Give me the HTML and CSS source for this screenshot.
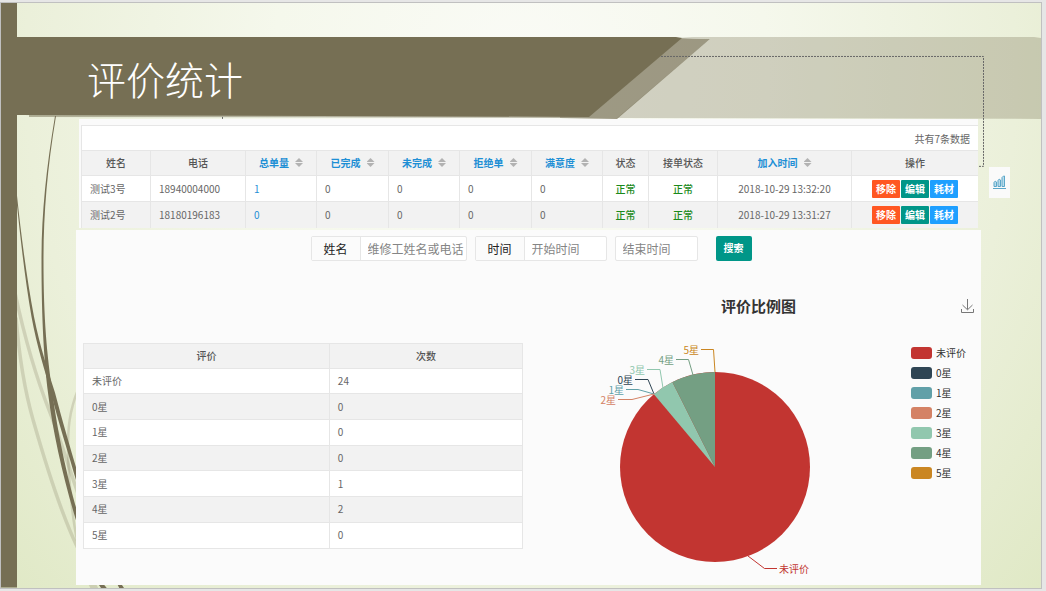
FILE: index.html
```html
<!DOCTYPE html>
<html lang="zh-CN">
<head>
<meta charset="utf-8">
<title>评价统计</title>
<link rel="stylesheet" href="styles.css">
</head>
<body>
<div class="slide">
  <svg class="art" viewBox="1 3 1040 585" preserveAspectRatio="none" aria-hidden="true">
    <g fill="none" stroke="#766f54" stroke-opacity=".22">
      <path stroke-width="3.5" d="M15 293C25 340 37 380 50 413S70 472 78 494"/>
      <path stroke-width="3.5" d="M16 318C19 355 25 392 33 420S58 508 78 549"/>
      <path stroke-width="2.5" d="M78 390C69 412 68 430 68 448S71 515 78 545"/>
      <path stroke-width="7" d="M91 582L96 592"/>
    </g>
    <g fill="#766f54">
      <path d="M55 116C46 170 41.500 215 41.500 260C41.500 320 44 360 48 393C53 435 65 485 77 524L77 511C67 477 57 430 52.500 393C47 355 43.500 320 43.500 260C43.500 215 47 170 56 116Z"/>
      <path d="M16 196C20 235 25 280 31.500 317C37 347 45 371 51 393C58 422 69 455 77 484L77 471C70 447 62 420 55 393C48 371 40 347 34 317C27 280 21 235 17 196Z"/>
      <path d="M98 584L103 584L108 590L102 590ZM117 584L121 584L125 590L120 590Z"/>
      <path d="M1 3H17V588H1Z"/>
      <path fill-opacity=".3" d="M676 37H1034L1041 38V119L617 118L710 39Z"/>
      <path fill-opacity=".7" d="M676 38L710 39L617 119L560 118V114H585Z"/>
      <path fill-opacity=".5" d="M29 114H560V118L29 117Z"/>
      <path d="M17 37H676L682 38L589 117L17 115Z"/>
    </g>
    <path fill="none" stroke="#666" stroke-dasharray="2 1" d="M661 56.500H983.500V166.500H970M222.500 117V120"/>
  </svg>

  <header class="banner"><h1>评价统计</h1></header>

  <main class="content">
    <div class="top">
      <section class="workers">
        <p class="total">共有7条数据</p>
        <table class="grid">
          <colgroup>
            <col class="c-name"><col class="c-phone"><col class="c-count"><col class="c-done"><col class="c-count"><col class="c-done"><col class="c-count"><col class="c-state"><col class="c-order"><col class="c-time"><col>
          </colgroup>
          <thead>
            <tr><th>姓名</th><th>电话</th><th class="sort">总单量<i></i></th><th class="sort">已完成<i></i></th><th class="sort">未完成<i></i></th><th class="sort">拒绝单<i></i></th><th class="sort">满意度<i></i></th><th>状态</th><th>接单状态</th><th class="sort">加入时间<i></i></th><th>操作</th></tr>
          </thead>
          <tbody>
            <tr><td>测试3号</td><td>18940004000</td><td><a href="#">1</a></td><td>0</td><td>0</td><td>0</td><td>0</td><td class="ok">正常</td><td class="ok">正常</td><td class="mid">2018-10-29 13:32:20</td><td><div class="actions"><button class="act del">移除</button><button class="act edit">编辑</button><button class="act part">耗材</button></div></td></tr>
            <tr><td>测试2号</td><td>18180196183</td><td><a href="#">0</a></td><td>0</td><td>0</td><td>0</td><td>0</td><td class="ok">正常</td><td class="ok">正常</td><td class="mid">2018-10-29 13:31:27</td><td><div class="actions"><button class="act del">移除</button><button class="act edit">编辑</button><button class="act part">耗材</button></div></td></tr>
          </tbody>
        </table>
      </section>
      <button class="stats" aria-label="统计">
        <svg width="13" height="15" viewBox="0 0 13 15" fill="#b9dbea" stroke="#5ba7c9"><path d="M1 7.500Q2.200 5 3.500 7V11.500H1ZM5 5.500Q6.200 3 7.500 5V11.500H5ZM9 2.500Q10.500 .5 11.500 1V11.500H9Z"/><path d="M0 13.500H13"/></svg>
      </button>
    </div>

    <section class="panel">
      <form class="search">
        <div class="group"><label for="who">姓名</label><input id="who" class="who" type="text" placeholder="维修工姓名或电话"></div>
        <div class="group"><label for="from">时间</label><input id="from" class="date" type="text" placeholder="开始时间"></div>
        <div class="group"><input class="date" type="text" placeholder="结束时间" aria-label="结束时间"></div>
        <button class="go" type="button">搜索</button>
      </form>
      <div class="split">
        <div class="scores">
          <table class="grid rating">
            <colgroup><col class="c-rate"><col></colgroup>
            <thead><tr><th>评价</th><th>次数</th></tr></thead>
            <tbody>
              <tr><td>未评价</td><td>24</td></tr>
              <tr><td>0星</td><td>0</td></tr>
              <tr><td>1星</td><td>0</td></tr>
              <tr><td>2星</td><td>0</td></tr>
              <tr><td>3星</td><td>1</td></tr>
              <tr><td>4星</td><td>2</td></tr>
              <tr><td>5星</td><td>0</td></tr>
            </tbody>
          </table>
        </div>
        <div class="chart">
          <div class="chart-head">
            <h2>评价比例图</h2>
            <button class="save" aria-label="保存为图片"><svg width="13" height="15" viewBox="0 0 13 15" fill="none" stroke="#777"><path d="M6.500 0V10.500M1.500 6L6.500 10.800L11.500 6M.5 10V13.500H12.500V10"/></svg></button>
          </div>
          <div class="chart-body">
            <svg class="pie" width="240" height="240" viewBox="590 340 240 240" role="img" aria-label="评价比例图">
              <circle cx="715" cy="467" r="95" fill="#c23531"/>
              <path fill="#91c7ae" d="M715 467L653.900 394.200A95 95 0 0 1 672.400 382.100Z"/>
              <path fill="#749f83" d="M715 467L672.400 382.100A95 95 0 0 1 715 372Z"/>
              <g fill="none">
                <path stroke="#ca8622" d="M701 349.500H713.500L715 372"/>
                <path stroke="#749f83" d="M676 359.500H688.500L693 375"/>
                <path stroke="#91c7ae" d="M647 369.500H660L663 388"/>
                <path stroke="#2f4554" d="M635 379.500H648L654 394"/>
                <path stroke="#61a0a8" d="M626 389.500H638L654 394"/>
                <path stroke="#d48265" d="M618 399.500H632L654 394"/>
                <path stroke="#c23531" d="M748 556L764.500 568.500H777"/>
              </g>
              <g text-anchor="end">
                <text x="699" y="354" fill="#ca8622">5星</text>
                <text x="674" y="364" fill="#749f83">4星</text>
                <text x="645" y="374" fill="#91c7ae">3星</text>
                <text x="633" y="384" fill="#2f4554">0星</text>
                <text x="624" y="394" fill="#61a0a8">1星</text>
                <text x="616" y="404" fill="#d48265">2星</text>
              </g>
              <text x="779" y="573" fill="#c23531">未评价</text>
            </svg>
            <ul class="legend">
              <li class="k0">未评价</li><li class="k1">0星</li><li class="k2">1星</li><li class="k3">2星</li><li class="k4">3星</li><li class="k5">4星</li><li class="k6">5星</li>
            </ul>
          </div>
        </div>
      </div>
    </section>
  </main>
</div>
</body>
</html>
```
FILE: styles.css
```css
* { box-sizing: border-box; }
body {
  margin: 0;
  padding: 2px 4px 2px 0;
  background: #e6e6e6;
  color: #666;
  font: 10px/14px "Noto Sans CJK SC", sans-serif;
}
h1, h2, p, ul { margin: 0; padding: 0; font-weight: normal; }
button, input { font: inherit; border: 0; padding: 0; margin: 0; }
a { color: #1e8fd5; text-decoration: none; }

.slide {
  position: relative;
  border: 1px solid #c0c0c0;
  background: radial-gradient(ellipse 68% 135% at 50% 12%, #fafbf6 0%, #f5f8ec 35%, #ebf0da 70%, #dfe8c4 100%);
}
.art { position: absolute; inset: 0; width: 100%; height: 100%; }
.banner, .content { position: relative; }
.banner { padding: 50px 0 16px 86px; }
h1 {
  color: #fff;
  font-size: 39px;
  line-height: 50px;
  font-weight: 300;
}
.content { padding: 0 60px 3px 75px; }

.top { display: flex; gap: 11px; align-items: flex-start; margin: 0 -29px 2px 3px; }
.workers { flex: 1; padding: 6px 0 0 2px; background: #fafafa; }
.total {
  height: 25px;
  padding: 0 8px;
  border: 1px solid #e6e6e6;
  border-width: 1px 0 0 1px;
  background: #fff;
  line-height: 25px;
  text-align: right;
}
.grid { width: 100%; border-collapse: collapse; table-layout: fixed; background: #fff; }
.grid th, .grid td { height: 26px; padding: 0 8px; border: 1px solid #e6e6e6; text-align: left; white-space: nowrap; }
.grid th { height: 25px; padding: 0; background: #f2f2f2; font-weight: 500; text-align: center; color: #555; }
.grid tbody tr:nth-child(even) { background: #f2f2f2; }
.workers .grid tr > * { border-right: 0; }
.workers .grid tr:last-child td { border-bottom: 0; }
.c-name { width: 69px; }
.c-phone { width: 95px; }
.c-count { width: 71px; }
.c-done { width: 72px; }
.c-state { width: 46px; }
.c-order { width: 69px; }
.c-time { width: 134px; }
.grid .sort { color: #1e8fd5; font-weight: bold; }
.sort i {
  display: inline-block;
  width: 8px;
  height: 9px;
  margin-left: 6px;
  background: #b2b2b2;
  clip-path: polygon(50% 0, 100% 44%, 0 44%, 0 56%, 100% 56%, 50% 100%, 0 56%, 0 44%);
}
.grid .ok { padding: 0; color: #1a8a1a; font-weight: 500; text-align: center; }
.grid .mid { padding: 0; text-align: center; }
.actions { display: flex; justify-content: center; gap: 1px; }
.act { width: 28px; height: 18px; color: #fff; font-weight: bold; border-radius: 1px; }
.del { background: #ff5722; }
.edit { background: #009688; }
.part { background: #1e9fff; }
.stats { width: 21px; height: 31px; margin-top: 48px; background: #fafafa; display: grid; place-items: center; }

.panel { padding: 6px 0 5px; background: #fbfbfb; }
.search { display: flex; justify-content: center; gap: 8px; padding-left: 5px; font-size: 12px; }
.group { display: flex; height: 25px; border: 1px solid #e6e6e6; border-radius: 2px; background: #fff; }
.group label { width: 49px; border-right: 1px solid #e6e6e6; background: #fbfbfb; color: #222; line-height: 24px; text-align: center; }
.group input { height: 23px; padding: 0 0 0 7px; background: none; color: #666; }
.group input::placeholder { color: #858585; }
.who { width: 105px; }
.date { width: 81px; }
.go { width: 36px; height: 25px; margin-left: 10px; border-radius: 2px; background: #009688; color: #fff; font-size: 10px; font-weight: bold; }

.split { display: grid; grid-template-columns: 460fr 445fr; }
.scores { padding: 82px 13px 0 7px; }
.rating { height: 206px; }
.grid.rating th, .grid.rating td { height: 25px; }
.c-rate { width: 56%; }
.chart-head { display: flex; justify-content: center; position: relative; padding-top: 33px; }
h2 { color: #333; font-size: 15px; line-height: 24px; font-weight: bold; }
.save { position: absolute; right: 7px; bottom: 4px; height: 15px; background: none; line-height: 0; }
.chart-body { display: flex; justify-content: space-between; align-items: flex-start; padding: 22px 15px 0 54px; }
.pie { display: block; font-size: 10px; }
.legend { list-style: none; padding-top: 3px; color: #333; }
.legend li { display: flex; align-items: center; gap: 4px; height: 20px; }
.legend li::before { content: ""; width: 21px; height: 12px; border-radius: 3px; background: currentColor; }
.legend .k0::before { color: #c23531; }
.k1::before { color: #2f4554; }
.k2::before { color: #61a0a8; }
.k3::before { color: #d48265; }
.k4::before { color: #91c7ae; }
.k5::before { color: #749f83; }
.k6::before { color: #ca8622; }
```
